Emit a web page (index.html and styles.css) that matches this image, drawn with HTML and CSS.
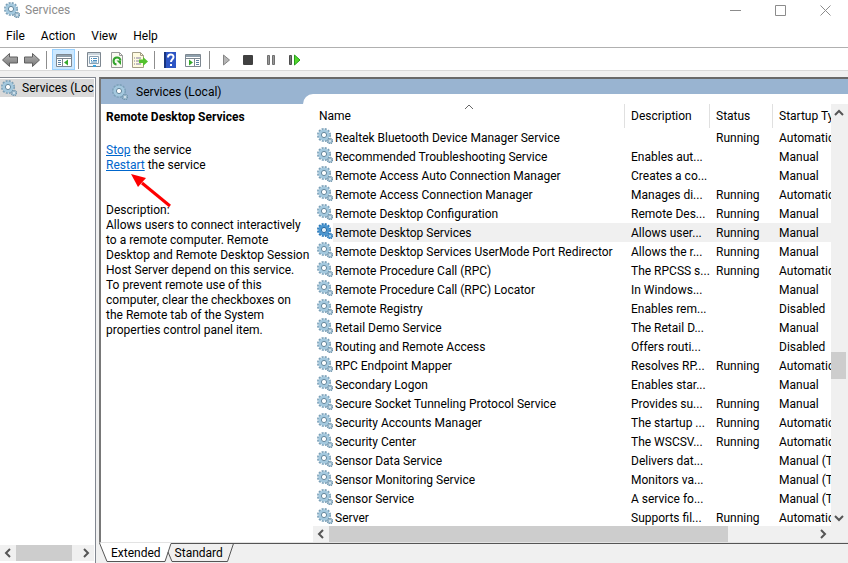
FILE: index.html
```html
<!DOCTYPE html>
<html lang="en">
<head>
<meta charset="UTF-8">
<meta name="viewport" content="width=device-width, initial-scale=1.0">
<title>Services</title>
<link rel="stylesheet" href="styles.css">
</head>
<body>

<!-- Shared icons -->
<svg class="defs" aria-hidden="true">
    <symbol id="gear" viewBox="0 0 16 16">
        <circle cx="7" cy="7" r="6" fill="none" stroke="#7ba0b8" stroke-width="2" stroke-dasharray="2 1.142"/>
        <circle cx="7" cy="7" r="4.2" fill="#c4deee" stroke="#a3c8de" stroke-width="2.800"/>
        <circle cx="7" cy="7" r="2.600" fill="#fff" stroke="#64879d" stroke-width="1"/>
        <circle cx="13" cy="13" r="2.500" fill="#a9c6d8" stroke="#6f93aa" stroke-width="1.600" stroke-dasharray="1.200 .764"/>
        <circle cx="13" cy="13" r=".8" fill="#fff"/>
    </symbol>
    <symbol id="gear-selected" viewBox="0 0 16 16">
        <circle cx="7" cy="7" r="6" fill="none" stroke="#2a78b8" stroke-width="2" stroke-dasharray="2 1.142"/>
        <circle cx="7" cy="7" r="4.2" fill="#8fc0e4" stroke="#4a95cf" stroke-width="2.800"/>
        <circle cx="7" cy="7" r="2.600" fill="#e4f0f8" stroke="#2568a0" stroke-width="1"/>
        <circle cx="13" cy="13" r="2.500" fill="#5b9fd2" stroke="#2a78b8" stroke-width="1.600" stroke-dasharray="1.200 .764"/>
        <circle cx="13" cy="13" r=".8" fill="#fff"/>
    </symbol>
    <symbol id="chevron" viewBox="0 0 10 10">
        <path d="M1 7l4-4 4 4" fill="none" stroke="#555" stroke-width="2"/>
    </symbol>
    <linearGradient id="arrowFill" x1="0" y1="0" x2="0" y2="1">
        <stop offset="0" stop-color="#b5b5b5"/><stop offset="1" stop-color="#777"/>
    </linearGradient>
</svg>

<header class="title-bar">
    <svg class="icon"><use href="#gear"/></svg>
    <h1>Services</h1>
    <div class="window-buttons">
        <button aria-label="Minimize"><svg viewBox="0 0 11 11"><path d="M0 5.500h11"/></svg></button>
        <button aria-label="Maximize"><svg viewBox="0 0 11 11"><path d="M.5.5h10v10H.5z"/></svg></button>
        <button aria-label="Close"><svg viewBox="0 0 11 11"><path d="M.5.5l10 10M10.500.5l-10 10"/></svg></button>
    </div>
</header>

<nav class="menu-bar">
    <button>File</button>
    <button>Action</button>
    <button>View</button>
    <button>Help</button>
</nav>

<div class="toolbar">
    <button class="arrow" aria-label="Back"><svg viewBox="0 0 16 16"><path d="M.5 8L7.500 1.500V5h8v6h-8v3.500z" fill="url(#arrowFill)" stroke="#5f5f5f"/></svg></button>
    <button aria-label="Forward"><svg viewBox="0 0 16 16"><path d="M15.500 8L8.500 1.500V5h-8v6h8v3.500z" fill="url(#arrowFill)" stroke="#5f5f5f"/></svg></button>
    <span class="divider"></span>
    <button class="pressed" aria-label="Show console tree"><svg viewBox="0 0 16 16"><path d="M.5 2.500h15v12H.5z" fill="#fff" stroke="#7d8790"/><path d="M1 3h14v2H1z" fill="#8fa0ad"/><path d="M1 6.500h14M6.500 7v7" stroke="#7d8790"/><path d="M2 8.500h3M2 10.500h3M2 12.500h3" stroke="#5b7fa0"/><path d="M12 7.500v6L8 10.500z" fill="#35a82c"/></svg></button>
    <span class="divider"></span>
    <button aria-label="Properties"><svg viewBox="0 0 16 16"><path d="M1.500.5h13v14h-13z" fill="#f6f9fb" stroke="#7d8790"/><path d="M2 2h12" stroke="#9fb1bf"/><path d="M3.500 4.500h9v7h-9z" fill="#fff" stroke="#8ba1b3"/><path d="M5 6.500h1M7 6.500h4M5 8.500h1M7 8.500h4M5 10h6" stroke="#4b8fc0"/><path d="M7 13h3v2H7z" fill="#36a0dd"/></svg></button>
    <button aria-label="Refresh"><svg viewBox="0 0 16 16"><path d="M2.500.5h8l3 3v12h-11z" fill="#fafaf2" stroke="#999"/><path d="M10.500.5v3h3" fill="none" stroke="#999"/><path d="M7.500 12.500a3.500 3.500 0 1 1 4-4" fill="none" stroke="#32a32c" stroke-width="2"/><path d="M7.500 8.500H12v4.500z" fill="#32a32c"/></svg></button>
    <button aria-label="Export list"><svg viewBox="0 0 16 16"><path d="M.5.5h8l3 3v12H.5z" fill="#fffbe0" stroke="#a39e86"/><path d="M8.500.5v3h3" fill="none" stroke="#a39e86"/><path d="M2 6h1M4 6h5M2 9h1M4 9h4M2 12h1M4 12h5" stroke="#817ba0"/><path d="M7 7.500h4V5l5 4.500-5 4.500v-3H7z" fill="#53c12c"/></svg></button>
    <span class="divider"></span>
    <button aria-label="Help topics"><svg viewBox="0 0 16 16"><path d="M2 0h12v16H2z" fill="#2d55c4"/><path d="M2 0h2v16H2z" fill="#18357f"/><path d="M6 5.500c0-4 5.500-4 5.500-.5 0 2.500-2.500 2-2.500 5" fill="none" stroke="#fff" stroke-width="2"/><path d="M8 12h2v2H8z" fill="#fff"/></svg></button>
    <button aria-label="Show action pane"><svg viewBox="0 0 16 16"><path d="M.5 2.500h15v12H.5z" fill="#fff" stroke="#7d8790"/><path d="M1 3h14v2H1z" fill="#8fa0ad"/><path d="M1 6.500h14M9.500 7v7" stroke="#7d8790"/><path d="M11 8.500h3M11 10.500h3M11 12.500h3" stroke="#5b7fa0"/><path d="M4 7.500v6l4-3z" fill="#35a82c"/></svg></button>
    <span class="divider last"></span>
    <button aria-label="Start service"><svg viewBox="0 0 16 16"><path d="M4.500 3v10l6-5z" fill="#b5b5b5" stroke="#858585"/></svg></button>
    <button aria-label="Stop service"><svg viewBox="0 0 16 16"><rect x="1" y="3" width="10" height="10" rx="1" fill="#404040"/></svg></button>
    <button aria-label="Pause service"><svg viewBox="0 0 16 16"><path d="M2.500 3.500h2v9h-2zM7.500 3.500h2v9h-2z" fill="#999" stroke="#6f6f6f"/></svg></button>
    <button aria-label="Restart service"><svg viewBox="0 0 16 16"><path d="M1.500 3.500h2v9h-2z" fill="#777" stroke="#4f4f4f"/><path d="M6.500 3v10l5.500-5z" fill="#54d62c" stroke="#25a01c"/></svg></button>
</div>

<main class="workspace">
    <aside class="tree-pane">
        <div class="tree-item">
            <svg class="icon"><use href="#gear"/></svg>
            <span>Services (Local)</span>
        </div>
        <div class="h-scroll">
            <button aria-label="Scroll tree left"><svg class="turn-left"><use href="#chevron"/></svg></button>
            <div class="h-track"><div class="h-thumb tree-thumb"></div></div>
            <button aria-label="Scroll tree right"><svg class="turn-right"><use href="#chevron"/></svg></button>
        </div>
    </aside>

    <section class="content">
        <div class="details">
            <div class="pane-title">
                <svg class="icon"><use href="#gear"/></svg>
                <span>Services (Local)</span>
            </div>
            <div class="panes">
                <article class="info">
                    <h2>Remote Desktop Services</h2>
                    <p class="links"><a href="#">Stop</a> the service<br><a href="#">Restart</a> the service
                        <svg class="pointer" viewBox="0 0 42 34"><path d="M39 32L11 9" stroke="#fe0000" stroke-width="3"/><path d="M0 0l15 4-8 9z" fill="#fe0000"/></svg>
                    </p>
                    <p>Description:<br>Allows users to connect interactively<br>to a remote computer. Remote<br>Desktop and Remote Desktop Session<br>Host Server depend on this service.<br>To prevent remote use of this<br>computer, clear the checkboxes on<br>the Remote tab of the System<br>properties control panel item.</p>
                </article>

                <div class="list">
                    <div class="list-main">
                        <div class="table-wrap">
                            <svg class="sort-mark" viewBox="0 0 10 10"><path d="M1 7l4-4 4 4" fill="none" stroke="#666"/></svg>
                            <table>
                                <thead>
                                    <tr>
                                        <th class="col-name">Name</th>
                                        <th class="col-desc">Description</th>
                                        <th class="col-status">Status</th>
                                        <th>Startup Type</th>
                                    </tr>
                                </thead>
                                <tbody id="serviceRows"></tbody>
                            </table>
                        </div>
                        <div class="h-scroll">
                            <button aria-label="Scroll list left"><svg class="turn-left"><use href="#chevron"/></svg></button>
                            <div class="h-track"><div class="h-thumb list-thumb"></div></div>
                            <button aria-label="Scroll list right"><svg class="turn-right"><use href="#chevron"/></svg></button>
                        </div>
                    </div>
                    <div class="v-scroll">
                        <button aria-label="Scroll up"><svg><use href="#chevron"/></svg></button>
                        <div class="v-track"><div class="v-thumb"></div></div>
                        <button aria-label="Scroll down"><svg class="turn-down"><use href="#chevron"/></svg></button>
                    </div>
                </div>
            </div>
        </div>

        <div class="tabs">
            <svg class="tab-edge" viewBox="0 0 10 19"><path d="M0 0h10v18H8z" fill="#fff"/><path d="M.5 0L8 18.500h2" fill="none" stroke="#555"/></svg>
            <button class="tab active">Extended</button>
            <svg class="tab-edge" viewBox="0 0 10 19"><path d="M0 0h9L2 18H0z" fill="#fff"/><path d="M10 .5H8L2 18.500H0M5 9l4 9.500h1" fill="none" stroke="#555"/></svg>
            <button class="tab">Standard</button>
            <svg class="tab-edge" viewBox="0 0 10 19"><path d="M0 .5h10M8.500.5l-6 18H0" fill="none" stroke="#555"/></svg>
            <div class="tab-rest"></div>
        </div>
    </section>
</main>

<script>
    const services = [
        ["Realtek Bluetooth Device Manager Service", "", "Running", "Automatic"],
        ["Recommended Troubleshooting Service", "Enables aut...", "", "Manual"],
        ["Remote Access Auto Connection Manager", "Creates a co...", "", "Manual"],
        ["Remote Access Connection Manager", "Manages di...", "Running", "Automatic"],
        ["Remote Desktop Configuration", "Remote Des...", "Running", "Manual"],
        ["Remote Desktop Services", "Allows user...", "Running", "Manual"],
        ["Remote Desktop Services UserMode Port Redirector", "Allows the r...", "Running", "Manual"],
        ["Remote Procedure Call (RPC)", "The RPCSS s...", "Running", "Automatic"],
        ["Remote Procedure Call (RPC) Locator", "In Windows...", "", "Manual"],
        ["Remote Registry", "Enables rem...", "", "Disabled"],
        ["Retail Demo Service", "The Retail D...", "", "Manual"],
        ["Routing and Remote Access", "Offers routi...", "", "Disabled"],
        ["RPC Endpoint Mapper", "Resolves RP...", "Running", "Automatic"],
        ["Secondary Logon", "Enables star...", "", "Manual"],
        ["Secure Socket Tunneling Protocol Service", "Provides su...", "Running", "Manual"],
        ["Security Accounts Manager", "The startup ...", "Running", "Automatic"],
        ["Security Center", "The WSCSV...", "Running", "Automatic"],
        ["Sensor Data Service", "Delivers dat...", "", "Manual (Trigger Start)"],
        ["Sensor Monitoring Service", "Monitors va...", "", "Manual (Trigger Start)"],
        ["Sensor Service", "A service fo...", "", "Manual (Trigger Start)"],
        ["Server", "Supports fil...", "Running", "Automatic"]
    ];
    const selected = "Remote Desktop Services";

    document.getElementById("serviceRows").innerHTML = services.map(([name, desc, status, startup]) => {
        const active = name === selected;
        return `
            <tr class="${active ? "selected" : ""}">
                <td><div class="name"><svg class="icon"><use href="#${active ? "gear-selected" : "gear"}"/></svg><span>${name}</span></div></td>
                <td>${desc}</td>
                <td>${status}</td>
                <td>${startup}</td>
            </tr>`;
    }).join("");
</script>

</body>
</html>
```
FILE: styles.css
```css
/* Basic Styles */
* {
    box-sizing: border-box;
}
body {
    margin: 0;
    height: 100vh;
    display: flex;
    flex-direction: column;
    overflow: hidden;
    background-color: #fff;
    color: #000;
    font-family: Roboto, "Open Sans", sans-serif;
    font-size: 12px;
    line-height: 15px;
}
button {
    margin: 0;
    padding: 0;
    border: none;
    background: none;
    color: inherit;
    font: inherit;
}
svg {
    display: block;
    flex: none;
}
.defs {
    position: absolute;
    width: 0;
    height: 0;
}
.icon {
    width: 16px;
    height: 16px;
}
/* Title and Menu */
.title-bar {
    display: flex;
    align-items: center;
    height: 20px;
    padding-left: 4px;
    gap: 5px;
    color: #8c8c8c;
}
.title-bar h1 {
    flex: 1;
    margin: 0;
    font-size: 12px;
    font-weight: normal;
}
.window-buttons {
    display: flex;
}
.window-buttons button {
    display: flex;
    justify-content: center;
    width: 45px;
}
.window-buttons svg {
    width: 11px;
    height: 11px;
    fill: none;
    stroke: #8c8c8c;
}
.menu-bar {
    display: flex;
    align-items: center;
    height: 28px;
    padding: 6px 6px 0;
    gap: 16px;
    border-bottom: 1px solid #b0b0b0;
}
/* Toolbar */
.toolbar {
    display: flex;
    align-items: center;
    height: 23px;
    padding-top: 1px;
    border-bottom: 1px solid #d9d9d9;
}
.toolbar button {
    display: flex;
    align-items: center;
    justify-content: center;
    width: 23px;
    height: 21px;
}
.toolbar svg {
    width: 16px;
    height: 16px;
}
.toolbar .arrow {
    width: 20px;
}
.toolbar .pressed {
    margin-left: 2px;
    background-color: #cce8ff;
    border: 1px solid #99d1ff;
}
.divider {
    width: 1px;
    height: 18px;
    margin: 0 3px;
    background-color: #8d8d8d;
}
.divider.last {
    margin: 0 5px;
}
/* Layout */
.workspace {
    flex: 1;
    display: flex;
    gap: 3px;
    min-height: 0;
    padding-top: 6px;
    background-color: #f0f0f0;
}
.tree-pane {
    display: flex;
    flex-direction: column;
    justify-content: space-between;
    width: 96px;
    padding: 1px 1px 2px 0;
    background-color: #fff;
    border-top: 1px solid #828790;
    border-right: 1px solid #828790;
}
.tree-item {
    display: flex;
    align-items: center;
    gap: 5px;
    height: 18px;
    padding-left: 1px;
    overflow: hidden;
    white-space: nowrap;
    background-color: #d9d9d9;
}
.content {
    flex: 1;
    display: flex;
    flex-direction: column;
    min-width: 0;
}
.details {
    flex: 1;
    display: flex;
    flex-direction: column;
    min-height: 0;
    background-color: #fff;
    border-top: 2px solid #696969;
    border-left: 2px solid #787878;
    border-bottom: 1px solid #e3e3e3;
}
.pane-title {
    display: flex;
    align-items: center;
    gap: 8px;
    height: 25px;
    padding-left: 11px;
    background-color: #99b4d1;
}
.pane-title span, .tree-item span {
    padding-top: 1px;
}
.panes {
    flex: 1;
    display: flex;
    min-height: 0;
}
/* Service Info */
.info {
    position: relative;
    z-index: 1;
    width: 202px;
    padding: 6px 0 0 5px;
    white-space: nowrap;
}
.info h2 {
    margin: 0 0 18px;
    font-size: 12px;
    line-height: 15px;
}
.info p {
    margin: 0;
}
.info .links {
    position: relative;
    margin-bottom: 30px;
}
.info a {
    color: #0066cc;
}
.pointer {
    position: absolute;
    top: 31px;
    left: 25px;
    width: 42px;
    height: 34px;
}
/* Service List */
.list {
    flex: 1;
    display: flex;
    min-width: 0;
    margin-top: -10px;
    padding: 10px 0 0 10px;
    background-color: #fff;
    border-top-left-radius: 10px;
}
.list-main {
    flex: 1;
    display: flex;
    flex-direction: column;
    min-width: 0;
}
.table-wrap {
    position: relative;
    flex: 1;
    overflow: hidden;
}
.sort-mark {
    position: absolute;
    top: -2px;
    left: 151px;
    width: 10px;
    height: 10px;
}
table {
    width: 100%;
    table-layout: fixed;
    border-collapse: separate;
    border-spacing: 0;
}
th, td {
    overflow: hidden;
    padding: 0 0 0 6px;
    text-align: left;
    font-weight: normal;
    white-space: nowrap;
}
th {
    height: 24px;
    border-right: 1px solid #e0e0e0;
}
th:last-child {
    border-right: none;
}
td {
    height: 19px;
    padding-top: 2px;
}
td:first-child {
    padding: 0 0 0 4px;
}
.col-name {
    width: 312px;
}
.col-desc {
    width: 85px;
}
.col-status {
    width: 63px;
}
.name {
    display: flex;
    align-items: flex-start;
}
.name span {
    flex: 1;
    padding: 2px 0 0 2px;
    line-height: 17px;
}
.selected td:not(:first-child), .selected .name span {
    background-color: #f0f0f0;
}
/* Scrollbars */
.h-scroll {
    display: flex;
    height: 16px;
    background-color: #f0f0f0;
}
.h-scroll button, .v-scroll button {
    display: flex;
    align-items: center;
    justify-content: center;
    width: 16px;
    height: 16px;
}
.h-scroll svg, .v-scroll svg {
    width: 10px;
    height: 10px;
}
.h-track, .v-track {
    flex: 1;
}
.h-thumb {
    height: 100%;
    background-color: #cdcdcd;
}
.tree-thumb {
    width: 90%;
}
.list-thumb {
    width: 82%;
}
.v-scroll {
    display: flex;
    flex-direction: column;
    width: 17px;
    padding: 1px 0 16px;
    background-color: #f0f0f0;
}
.v-track {
    display: flex;
    align-items: flex-end;
    padding-bottom: 131px;
}
.v-thumb {
    width: 15px;
    height: 27px;
    background-color: #cdcdcd;
}
.turn-left {
    transform: rotate(-90deg);
}
.turn-right {
    transform: rotate(90deg);
}
.turn-down {
    transform: rotate(180deg);
}
/* Tabs */
.tabs {
    display: flex;
    height: 20px;
}
.tab-edge {
    width: 10px;
    height: 19px;
}
.tab {
    height: 19px;
    padding: 2px 2px 0;
    border-top: 1px solid #555;
    border-bottom: 1px solid #555;
}
.tab.active {
    background-color: #fff;
    border-top-color: #fff;
}
.tab-rest {
    flex: 1;
    border-top: 1px solid #555;
}
```
